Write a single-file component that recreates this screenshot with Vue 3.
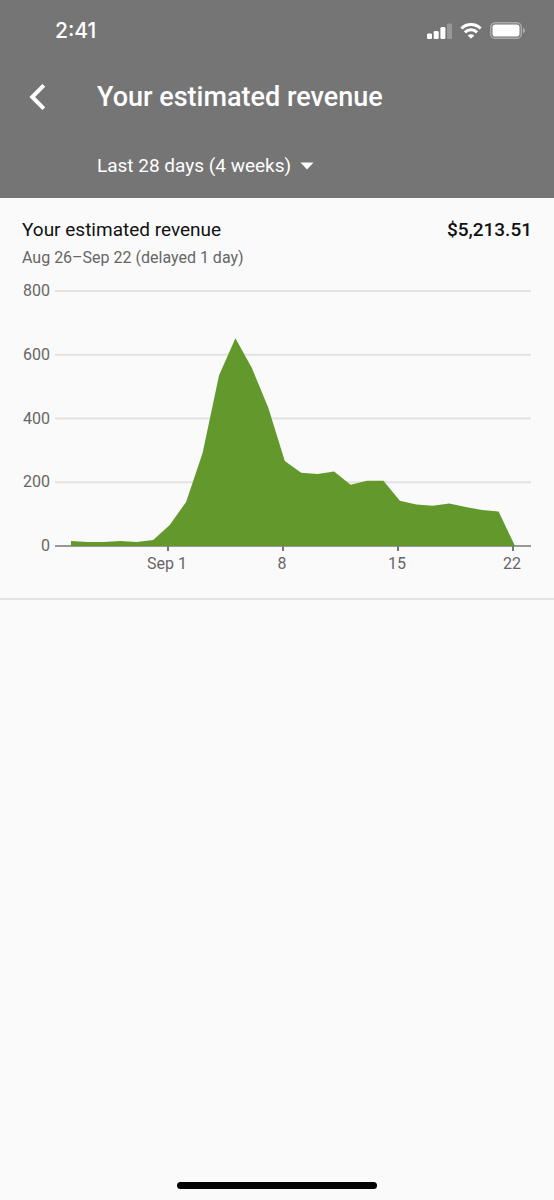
<script setup>
import { computed, ref } from "vue";

const periods = [
    { value: "7", label: "Last 7 days" },
    { value: "28", label: "Last 28 days (4 weeks)" },
    { value: "90", label: "Last 90 days" },
    { value: "365", label: "Last 365 days" },
];
const period = ref("28");

const revenue = [
    16, 13, 13, 16, 13, 19, 66, 138, 292, 535, 652, 558, 434, 267, 230, 226, 234, 192, 205, 205,
    142, 130, 126, 133, 122, 113, 108, 0,
];

const plot = { left: 33, right: 509, top: 19, bottom: 274, first: 49, last: 493 };
const max = 800;

const scaleY = (value) => plot.bottom - (value / max) * (plot.bottom - plot.top);

const gridLines = [800, 600, 400, 200, 0].map((value) => ({ value, y: scaleY(value) }));

const ticks = [
    { label: "Sep 1", x: 146 },
    { label: "8", x: 261 },
    { label: "15", x: 376 },
    { label: "22", x: 491 },
];

const areaPoints = computed(() => {
    const step = (plot.last - plot.first) / (revenue.length - 1);
    const line = revenue.map((value, i) => `${(plot.first + i * step).toFixed(1)},${scaleY(value).toFixed(1)}`);
    return [`${plot.first},${plot.bottom}`, ...line, `${plot.last},${plot.bottom}`].join(" ");
});
</script>

<template>
    <div class="screen">
        <header class="header">
            <div class="status">
                <span class="status__time">2:41</span>
                <div class="status__icons">
                    <svg width="25" height="16" viewBox="0 0 25 16" fill="#fff" aria-hidden="true">
                        <rect x="0" y="10.5" width="5" height="5.5" rx="1.3" />
                        <rect x="6.7" y="8" width="5" height="8" rx="1.3" />
                        <rect x="13.4" y="4" width="5" height="12" rx="1.3" />
                        <rect x="20" y="0.5" width="5" height="15.5" rx="1.3" opacity="0.25" />
                    </svg>
                    <svg width="22" height="16" viewBox="0 0 22 16" aria-hidden="true">
                        <g fill="none" stroke="#fff" stroke-width="3">
                            <path d="M1.4 5.5a13.6 13.6 0 0 1 19.2 0" />
                            <path d="M4.9 9.4a8.6 8.6 0 0 1 12.2 0" />
                        </g>
                        <path d="M11 15.8 7.7 12.6a4.7 4.7 0 0 1 6.6 0z" fill="#fff" />
                    </svg>
                    <svg width="36" height="17" viewBox="0 0 36 17" aria-hidden="true">
                        <rect x="0.7" y="0.7" width="30.6" height="15.6" rx="4.6" fill="none" stroke="#fff" stroke-width="1.4" opacity="0.4" />
                        <rect x="2.5" y="2.5" width="27" height="12" rx="2.8" fill="#fff" />
                        <path d="M33 5.8c2.6 1 2.6 4.4 0 5.4z" fill="#fff" opacity="0.4" />
                    </svg>
                </div>
            </div>
            <div class="toolbar">
                <button class="toolbar__back" type="button" aria-label="Back">
                    <svg width="18" height="28" viewBox="0 0 18 28" fill="none" stroke="#fff" stroke-width="4" aria-hidden="true">
                        <path d="M15.8 2.4 4.2 14l11.6 11.6" />
                    </svg>
                </button>
                <h1 class="toolbar__title">Your estimated revenue</h1>
            </div>
            <div class="period">
                <select v-model="period" class="period__select" aria-label="Period">
                    <option v-for="item in periods" :key="item.value" :value="item.value">{{ item.label }}</option>
                </select>
                <svg class="period__arrow" width="14" height="8" viewBox="0 0 14 8" fill="#fff" aria-hidden="true">
                    <path d="M0.5 0.5h13l-6.5 7z" />
                </svg>
            </div>
        </header>

        <main class="content">
            <section class="card">
                <div class="card__row">
                    <h2 class="card__title">Your estimated revenue</h2>
                    <span class="card__total">$5,213.51</span>
                </div>
                <p class="card__range">Aug 26–Sep 22 (delayed 1 day)</p>
                <svg class="chart" viewBox="0 0 510 314" role="img" aria-label="Estimated revenue by day">
                    <line
                        v-for="line in gridLines"
                        :key="line.value"
                        :class="['chart__grid', { 'chart__grid--base': line.value === 0 }]"
                        :x1="plot.left"
                        :x2="plot.right"
                        :y1="line.y"
                        :y2="line.y" />
                    <polygon class="chart__area" :points="areaPoints" />
                    <text v-for="line in gridLines" :key="line.value" class="chart__label" x="28" :y="line.y + 5" text-anchor="end">
                        {{ line.value }}
                    </text>
                    <g v-for="tick in ticks" :key="tick.label">
                        <line class="chart__tick" :x1="tick.x" :x2="tick.x" :y1="plot.bottom" :y2="plot.bottom + 5" />
                        <text class="chart__label" :x="tick.x - 1" y="297" text-anchor="middle">{{ tick.label }}</text>
                    </g>
                </svg>
            </section>
        </main>

        <div class="home-indicator"></div>
    </div>
</template>

<style>
body {
    margin: 0;
    background: #fafafa;
}
</style>

<style scoped>
.screen {
    display: flex;
    flex-direction: column;
    min-height: 100vh;
    font-family: Roboto, sans-serif;
    background: #fafafa;
}
.header {
    display: flex;
    flex-direction: column;
    color: #fff;
    background: #757575;
}
.status {
    display: flex;
    align-items: center;
    justify-content: space-between;
    height: 61px;
    padding: 0 28px 0 55px;
}
.status__time {
    font-family: Inter, sans-serif;
    font-size: 21px;
    font-weight: 500;
}
.status__icons {
    display: flex;
    align-items: center;
    gap: 8px;
}
.toolbar {
    display: flex;
    align-items: center;
    height: 72px;
    padding: 0 28px;
}
.toolbar__back {
    display: flex;
    width: 69px;
    padding: 0;
    border: 0;
    background: none;
    cursor: pointer;
}
.toolbar__title {
    margin: 0;
    font-size: 27px;
    font-weight: 500;
}
.period {
    display: flex;
    align-items: center;
    gap: 8px;
    height: 65px;
    padding-left: 97px;
}
.period__select {
    appearance: none;
    padding: 0;
    border: 0;
    background: none;
    color: #fff;
    font: 19px Roboto, sans-serif;
    cursor: pointer;
}
.period__select option {
    color: #111;
}
.content {
    flex: 1;
}
.card {
    padding: 18px 22px 12px;
    border-bottom: 2px solid #e2e2e2;
}
.card__row {
    display: flex;
    align-items: center;
    justify-content: space-between;
    line-height: 28px;
}
.card__title {
    margin: 0;
    font-size: 19px;
    font-weight: 400;
    color: #111;
}
.card__total {
    font-size: 19px;
    font-weight: 500;
    color: #111;
}
.card__range {
    margin: 0;
    font-size: 16px;
    line-height: 28px;
    color: #666;
}
.chart {
    display: block;
    width: 100%;
}
.chart__grid {
    stroke: #e2e2e2;
    stroke-width: 2;
}
.chart__grid--base {
    stroke: #999;
}
.chart__area {
    fill: #63982d;
}
.chart__tick {
    stroke: #777;
    stroke-width: 2;
}
.chart__label {
    font-size: 16px;
    fill: #666;
}
.home-indicator {
    width: 36%;
    height: 7px;
    margin: 0 auto 11px;
    border-radius: 4px;
    background: #000;
}
</style>
